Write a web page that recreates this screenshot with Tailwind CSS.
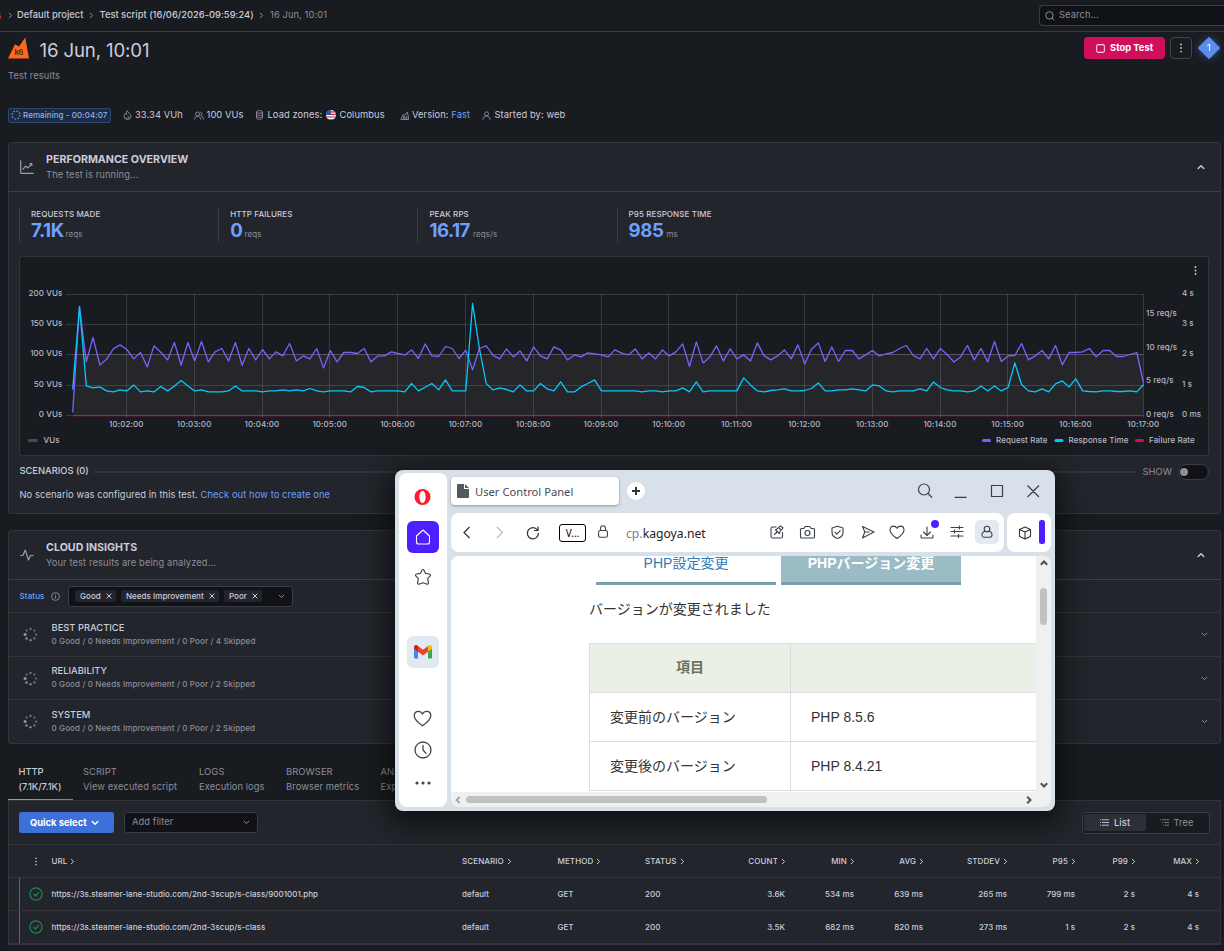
<!DOCTYPE html>
<html lang="en">
<head>
<meta charset="utf-8">
<title>16 Jun, 10:01 - Test results</title>
<script src="https://cdn.jsdelivr.net/npm/@tailwindcss/browser@4"></script>
</head>
<body class="relative h-[951px] w-[1224px] overflow-hidden whitespace-nowrap bg-[#181b1f] font-['Inter',sans-serif] text-[9.33px] leading-[14px] tracking-[0.01em] text-[#ccccdc]">

<svg class="hidden">
  <symbol id="chev-r" viewBox="0 0 6 8"><path d="M1.5 1.2 4.3 4 1.5 6.8" fill="none" stroke="currentColor" stroke-width="1.2" stroke-linecap="round" stroke-linejoin="round"/></symbol>
  <symbol id="chev-d" viewBox="0 0 8 6"><path d="M1.2 1.5 4 4.3 6.8 1.5" fill="none" stroke="currentColor" stroke-width="1.2" stroke-linecap="round" stroke-linejoin="round"/></symbol>
  <symbol id="chev-u" viewBox="0 0 8 6"><path d="M1.2 4.5 4 1.7 6.8 4.5" fill="none" stroke="currentColor" stroke-width="1.4" stroke-linecap="round" stroke-linejoin="round"/></symbol>
  <symbol id="dots" viewBox="0 0 4 10"><circle cx="2" cy="1.4" r=".9"/><circle cx="2" cy="5" r=".9"/><circle cx="2" cy="8.6" r=".9"/></symbol>
  <symbol id="x" viewBox="0 0 6 6"><path d="M.9.9 5.1 5.1M5.1.9.9 5.1" stroke="currentColor" stroke-width="1" stroke-linecap="round"/></symbol>
  <symbol id="spin" viewBox="0 0 16 16"><circle cx="2.2" cy="8" r="1.7" opacity=".95"/><circle cx="3.7" cy="12.2" r="1.4" opacity=".85"/><circle cx="8" cy="14" r="1.3" opacity=".8"/><circle cx="12.2" cy="12.2" r="1.2" opacity=".75"/><circle cx="14" cy="8" r="1.1" opacity=".7"/><circle cx="12.2" cy="3.8" r="1.1" opacity=".7"/><circle cx="8" cy="2" r="1.2" opacity=".75"/><circle cx="3.8" cy="3.8" r="1.1" opacity=".7"/></symbol>
  <symbol id="ok" viewBox="0 0 14 14"><circle cx="7" cy="7" r="6.1" fill="none" stroke="#1f8a52" stroke-width="1.2"/><path d="m4.600 7.200 1.800 1.800 3.200-3.600" fill="none" stroke="#1f8a52" stroke-width="1.2" stroke-linecap="round" stroke-linejoin="round"/></symbol>
</svg>

<header class="flex h-8 items-center border-b border-[#393b40] font-medium tracking-normal">
  <span class="w-1 text-[#d8613c]"><span class="-ml-1">s</span></span>
  <svg class="ml-[4px] mt-[-1px] h-[7px] w-[5px] text-[#8e8e9a]"><use href="#chev-r"/></svg>
  <span class="ml-1 mt-[-2px] w-[67px] tracking-[0.004em]">Default project</span>
  <svg class="ml-[5px] mt-[-1px] h-[7px] w-[5px] text-[#8e8e9a]"><use href="#chev-r"/></svg>
  <span class="ml-[5.500px] mt-[-2px] w-[154.500px] tracking-[0.002em]">Test script (16/06/2026-09:59:24)</span>
  <svg class="ml-[5px] mt-[-1px] h-[7px] w-[5px] text-[#8e8e9a]"><use href="#chev-r"/></svg>
  <span class="ml-[6px] mt-[-2px] font-normal tracking-[0.01em] text-[#8e8e9a]">16 Jun, 10:01</span>
  <div class="ml-auto flex h-[21px] w-[185px] items-center rounded-l-[4px] border border-r-0 border-[#3c3d43] bg-[#111217] font-normal tracking-[0.01em] text-[#8e8e9a]">
    <svg class="ml-[5px] size-[10px]" viewBox="0 0 10 10" fill="none" stroke="currentColor"><circle cx="4.400" cy="4.400" r="3.700"/><path d="m7.200 7.200 2.100 2.100"/></svg>
    <span class="ml-[4px] mt-[-1px]">Search...</span>
  </div>
</header>

<section class="flex h-[58px] justify-between">
  <div class="pl-2">
    <div class="flex h-9 items-center">
      <svg class="mt-[-4px] h-[22px] w-[21px]" viewBox="0 0 21 22"><path d="M0 21.500 7 7.200l4 2.300L17.200.500 21 21.500Z" fill="#ff671d"/><text x="6.600" y="18" font-size="7.500" font-family="Inter" font-weight="600" fill="#3a2620" letter-spacing="-.4">k6</text></svg>
      <h1 class="ml-[10.500px] mt-[2px] text-[18.67px] font-normal tracking-[-0.008em]">16 Jun, 10:01</h1>
    </div>
    <p class="mt-px text-[#8e8e9a]">Test results</p>
  </div>
  <div class="flex pr-[4px] pt-[5px]">
    <div class="flex h-[22px] w-[81px] items-center rounded-[4px] bg-[#d10e5c] pl-[12px] text-white"><svg class="size-[9px]" viewBox="0 0 9 9"><rect x=".6" y=".6" width="7.800" height="7.800" rx="1.600" fill="none" stroke="#f7d0de" stroke-width="1.100"/></svg><span class="ml-[5px] font-bold tracking-[0.002em]">Stop Test</span></div>
    <div class="ml-[5px] grid h-[22px] w-[22px] place-items-center rounded-[4px] border border-[#44454b]"><svg class="h-[10px] w-1 fill-[#ccccdc]"><use href="#dots"/></svg></div>
    <div class="ml-[6px] grid size-[22px] place-items-center drop-shadow-[0_0_4px_rgba(70,120,230,0.6)]"><div class="grid size-[16px] rotate-45 place-items-center rounded-[1px] bg-[#5b8def]"><span class="-rotate-45 font-medium text-[#e6e9f5]">1</span></div></div>
  </div>
</section>

<section class="mt-[17px] flex h-4 items-center pl-2">
  <div class="flex h-[15px] w-[103px] items-center rounded-[2px] border border-[#2b4677] bg-[#1d2a40] text-[8px] font-medium tracking-[0.008em] text-[#8ab2f5]"><svg class="ml-[2px] size-[10px]" viewBox="0 0 10 10"><circle cx="5" cy="5" r="4" fill="none" stroke="currentColor" stroke-width="1.100" stroke-dasharray="1.4 1.74"/></svg><span class="ml-[2px]">Remaining - 00:04:07</span></div>
  <svg class="ml-[12px] h-[10px] w-[9px]" viewBox="0 0 9 10" fill="none" stroke="#8e8e9a" stroke-width=".9"><path d="M4.300.700C4.600 2.600 8 3.600 8 6.300A3.300 3.300 0 0 1 4.500 9.400 3.400 3.400 0 0 1 1 6.200C1 4.900 1.700 4 2.500 3.200c0 .9.4 1.300.8 1.400C3.200 3 3.500 1.700 4.300.700Z"/><path d="M4.600 5.300c.9.800 1.200 1.400 1.200 2a1.300 1.300 0 0 1-2.600 0"/></svg>
  <span class="ml-[3px] w-[59px]">33.34 VUh</span>
  <svg class="mr-[2.500px] h-[9px] w-[10px]" viewBox="0 0 10 9" fill="none" stroke="#8e8e9a" stroke-width=".9"><circle cx="3.600" cy="3" r="2"/><path d="M.500 8.500c.100-2 1.300-3.300 3.100-3.300S6.600 6.500 6.700 8.500M6.200 1.100a2 2 0 0 1 .600 3.700C8.500 5.100 9.400 6.500 9.500 8.500"/></svg>
  <span class="w-[49px]">100 VUs</span>
  <svg class="mr-[5px] h-[10px] w-[7px]" viewBox="0 0 7 10" fill="none" stroke="#8e8e9a" stroke-width=".9"><ellipse cx="3.500" cy="1.900" rx="3" ry="1.300"/><path d="M.5 1.900v6c0 .8 1.300 1.400 3 1.400s3-.6 3-1.400v-6M.5 4c0 .8 1.300 1.300 3 1.300S6.500 4.800 6.500 4M.5 6c0 .8 1.300 1.300 3 1.300S6.500 6.800 6.500 6"/></svg>
  <span class="w-[58px]">Load zones:</span>
  <svg class="mr-[4px] size-[10px]" viewBox="0 0 10 10"><clipPath id="fl"><circle cx="5" cy="5" r="5"/></clipPath><g clip-path="url(#fl)"><rect width="10" height="10" fill="#f0eef2"/><path d="M0 1.800h10M0 4.400h10M0 7h10M0 9.500h10" stroke="#d62a45" stroke-width="1.200"/><rect width="5" height="5" fill="#2a56a8"/></g></svg>
  <span class="w-[60px]">Columbus</span>
  <svg class="mr-[3px] h-[9px] w-[9.500px]" viewBox="0 0 9 9" fill="none" stroke="#8e8e9a" stroke-width=".9"><path d="M.6 8.500 3 3.300l1.600 1L7.200.900l1.300 7.600ZM3.300 5v2.700M4.800 5.700 3.600 6.700l1.200 1M6.400 4.800 5.600 6.500"/><circle cx="6.200" cy="7" r=".7"/></svg>
  <span class="w-[69.500px]">Version: <span class="text-[#6e9fff]">Fast</span></span>
  <svg class="mr-[4px] h-[9px] w-[9px]" viewBox="0 0 9 9" fill="none" stroke="#8e8e9a" stroke-width=".9"><circle cx="4.500" cy="2.800" r="2"/><path d="M.9 8.700c.1-2.200 1.500-3.600 3.600-3.600s3.500 1.400 3.600 3.600"/></svg>
  <span>Started by: web</span>
</section>

<section class="ml-2 mt-[19px] h-[372px] w-[1213px] rounded-[3px] border border-[#33353b] bg-[#22252b]">
  <div class="flex h-[49px] items-center border-b border-[#3e4046] pl-[11px]">
    <svg class="h-[14px] w-[14px]" viewBox="0 0 14 14" fill="none" stroke="#9a9aa8" stroke-width="1.200" stroke-linecap="round" stroke-linejoin="round"><path d="M.7.700v12.600h12.600M2.900 9.300l2.600-3.200 2.500 1.800 3.600-4.100M10 3.700h1.800v1.700"/></svg>
    <div class="ml-[12px]">
      <h2 class="text-[10.67px] font-bold leading-[15px] tracking-[0.001em]">PERFORMANCE OVERVIEW</h2>
      <p class="leading-[15px] tracking-[0.012em] text-[#8e8e9a]">The test is running...</p>
    </div>
    <svg class="ml-auto mr-[15px] h-[6px] w-2"><use href="#chev-u"/></svg>
  </div>
  <div class="ml-[10px] mt-4 flex h-[34px] text-[8px] font-medium leading-[12px]">
    <div class="w-[199.200px] border-l border-[#3a3c42] pl-[11px]"><div>REQUESTS MADE</div><div class="mt-px flex h-5 items-baseline leading-5"><b class="text-[18.67px] font-bold tracking-[-0.026em] text-[#6e9fff]">7.1K</b><span class="ml-[2px] font-normal text-[#8e8e9a]">reqs</span></div></div>
    <div class="w-[199.200px] border-l border-[#3a3c42] pl-[11px]"><div>HTTP FAILURES</div><div class="mt-px flex h-5 items-baseline leading-5"><b class="text-[18.67px] font-bold tracking-[-0.02em] text-[#6e9fff]">0</b><span class="ml-[2px] font-normal text-[#8e8e9a]">reqs</span></div></div>
    <div class="w-[199.200px] border-l border-[#3a3c42] pl-[11px]"><div>PEAK RPS</div><div class="mt-px flex h-5 items-baseline leading-5"><b class="text-[18.67px] font-bold tracking-[-0.026em] text-[#6e9fff]">16.17</b><span class="ml-[3px] font-normal text-[#8e8e9a]">reqs/s</span></div></div>
    <div class="w-[199.200px] border-l border-[#3a3c42] pl-[11px]"><div>P95 RESPONSE TIME</div><div class="mt-px flex h-5 items-baseline leading-5"><b class="text-[18.67px] font-bold tracking-[-0.022em] text-[#6e9fff]">985</b><span class="ml-[3px] font-normal text-[#8e8e9a]">ms</span></div></div>
  </div>
  <div class="ml-[10px] mt-[14px] h-[200px] w-[1190px] rounded-[3px] border border-[#33353b] bg-[#181b1f]">
    <svg id="chart" class="block h-[198px] w-[1188px]" viewBox="20 257 1188 198" font-family="Inter" font-size="8" font-weight="500" fill="#b8b8c6">
      <rect x="72.700" y="354.500" width="1071" height="61" fill="#25262a"/>
      <g stroke="#ffffff" stroke-opacity=".13" stroke-width="1"><path d="M66 294.500H1143.500M66 324.500H1143.500M66 354.500H1143.500M66 385.500H1143.500M66 415.500H72.500"/><path id="grid"/></g>
      <path d="M72.700 354.500H1143.500" stroke="#55565a"/>
      <g text-anchor="end"><text x="62.500" y="296">200 VUs</text><text x="62.500" y="326">150 VUs</text><text x="62.500" y="356">100 VUs</text><text x="62.500" y="387">50 VUs</text><text x="62.500" y="417">0 VUs</text></g>
      <text x="1146" y="316">15 req/s</text><text x="1146" y="350">10 req/s</text><text x="1146" y="383">5 req/s</text><text x="1146" y="417">0 req/s</text>
      <text x="1182" y="296">4 s</text><text x="1182" y="326">3 s</text><text x="1182" y="356">2 s</text><text x="1182" y="387">1 s</text><text x="1182" y="417">0 ms</text>
      <g id="times" text-anchor="middle"></g>
      <g stroke-width="3" stroke-linecap="round"><path d="M29.500 440.500h7" stroke="#4a4b4f"/><path d="M983.500 440.500h6" stroke="#7b61ff"/><path d="M1056 440.500h6" stroke="#00c8ff"/><path d="M1136.500 440.500h6" stroke="#d10e5c"/></g>
      <text x="43.500" y="443">VUs</text><text x="996" y="443">Request Rate</text><text x="1068.500" y="443">Response Time</text><text x="1149" y="443">Failure Rate</text>
      <polyline id="rate" fill="none" stroke="#7b61ff" stroke-width="1.300" stroke-linejoin="round"/>
      <polyline id="resp" fill="none" stroke="#08c8fb" stroke-width="1.300" stroke-linejoin="round"/>
      <rect x="72.500" y="415" width="1071" height="1.200" fill="#d10e5c"/>
      <g fill="#ccccdc"><circle cx="1195.500" cy="267" r=".9"/><circle cx="1195.500" cy="270.500" r=".9"/><circle cx="1195.500" cy="274" r=".9"/></g>
    </svg>
  </div>
  <div class="ml-[10.500px] mr-[11px] mt-2 flex h-4 items-center">
    <span class="mt-[-2px] font-medium tracking-normal">SCENARIOS (0)</span>
    <span class="ml-[5px] mr-[6px] h-[2px] flex-1 bg-[#33353b]"></span>
    <span class="mt-[-1px] text-[#8e8e9a]">SHOW</span>
    <span class="ml-[6px] flex h-4 w-[31px] items-center rounded-full border border-[#3c3d43] bg-[#111217] pl-px"><span class="size-[8px] rounded-full bg-[#8e8e9a]"></span></span>
  </div>
  <p class="ml-[10.500px] mt-2 tracking-[0.01em]">No scenario was configured in this test. <span class="text-[#6e9fff]">Check out how to create one</span></p>
</section>

<section class="ml-2 mt-4 h-[214px] w-[1213px] rounded-[3px] border border-[#33353b] bg-[#22252b]">
  <div class="flex h-[49px] items-center border-b border-[#3e4046] pl-[11px]">
    <svg class="h-[12px] w-[14px]" viewBox="0 0 14 12" fill="none" stroke="#9a9aa8" stroke-width="1.200" stroke-linecap="round" stroke-linejoin="round"><path d="M.7 6.500h2.200L5.200 1l3.300 10 1.900-4.500h2.900"/></svg>
    <div class="ml-[12px]">
      <h2 class="text-[10.67px] font-bold leading-[15px] tracking-[0.001em]">CLOUD INSIGHTS</h2>
      <p class="leading-[15px] tracking-[0.012em] text-[#8e8e9a]">Your test results are being analyzed...</p>
    </div>
    <svg class="ml-auto mr-[15px] h-[6px] w-2"><use href="#chev-u"/></svg>
  </div>
  <div class="flex h-[33px] items-center border-b border-[#33353b] pl-[10.500px] text-[8px] font-medium tracking-[0.004em]">
    <span class="w-[31.500px] tracking-[0.015em] text-[#6e9fff]">Status</span>
    <svg class="size-[9px]" viewBox="0 0 9 9" fill="none" stroke="#8e8e9a" stroke-width=".9"><circle cx="4.500" cy="4.500" r="3.900"/><path d="M4.500 4v2.600M4.500 2.300v1"/></svg>
    <div class="ml-2 flex h-[21px] w-[225px] items-center rounded-[3px] border border-[#3c3d43] bg-[#111217] pl-1.5">
      <span class="flex h-3 w-[41px] items-center rounded-[2px] bg-[#22252b] pl-[5px]">Good<svg class="ml-auto mr-1 size-[6px]"><use href="#x"/></svg></span>
      <span class="ml-[5px] flex h-3 w-[98px] items-center rounded-[2px] bg-[#22252b] pl-[5px]">Needs Improvement<svg class="ml-auto mr-1 size-[6px]"><use href="#x"/></svg></span>
      <span class="ml-[5px] flex h-3 w-[38px] items-center rounded-[2px] bg-[#22252b] pl-[5px]">Poor<svg class="ml-auto mr-1 size-[6px]"><use href="#x"/></svg></span>
      <svg class="ml-auto mr-[7px] h-[5px] w-[7px] text-[#8e8e9a]"><use href="#chev-d"/></svg>
    </div>
  </div>
  <div class="flex h-[44px] items-center border-b border-[#33353b] pl-[14px]"><svg class="size-[15px] fill-[#9a9aa4]"><use href="#spin"/></svg><div class="ml-[13.500px]"><div class="font-medium leading-[14px] tracking-[0.002em]">BEST PRACTICE</div><div class="text-[8px] font-medium leading-[13px] tracking-[0.016em] text-[#8e8e9a]">0 Good / 0 Needs Improvement / 0 Poor / 4 Skipped</div></div><svg class="ml-auto mr-3 h-[5px] w-[7px] text-[#8e8e9a]"><use href="#chev-d"/></svg></div>
  <div class="flex h-[43px] items-center border-b border-[#33353b] pl-[14px]"><svg class="size-[15px] fill-[#9a9aa4]"><use href="#spin"/></svg><div class="ml-[13.500px] mt-[-2px]"><div class="font-medium leading-[14px] tracking-[0.002em]">RELIABILITY</div><div class="text-[8px] font-medium leading-[13px] tracking-[0.016em] text-[#8e8e9a]">0 Good / 0 Needs Improvement / 0 Poor / 2 Skipped</div></div><svg class="ml-auto mr-3 h-[5px] w-[7px] text-[#8e8e9a]"><use href="#chev-d"/></svg></div>
  <div class="flex h-[43px] items-center pl-[14px]"><svg class="size-[15px] fill-[#9a9aa4]"><use href="#spin"/></svg><div class="ml-[13.500px]"><div class="font-medium leading-[14px] tracking-[0.002em]">SYSTEM</div><div class="text-[8px] font-medium leading-[13px] tracking-[0.016em] text-[#8e8e9a]">0 Good / 0 Needs Improvement / 0 Poor / 2 Skipped</div></div><svg class="ml-auto mr-3 h-[5px] w-[7px] text-[#8e8e9a]"><use href="#chev-d"/></svg></div>
</section>

<nav class="ml-2 flex h-[56px] pt-[20px] leading-[15px] text-[#8e8e9a]">
  <div class="relative w-[65px] pl-[10.500px] font-medium tracking-[-0.004em] text-[#ccccdc]">HTTP<br>(7.1K/7.1K)<span class="absolute bottom-0 left-0 h-px w-[65px] bg-linear-to-r from-[#f58a2e] to-[#f0553a]"></span></div>
  <div class="w-[126px] pl-[10px]">SCRIPT<br>View executed script</div>
  <div class="w-[87px]">LOGS<br>Execution logs</div>
  <div class="w-[94.500px]">BROWSER<br>Browser metrics</div>
  <div>ANALYSIS<br>Explore metrics</div>
</nav>

<section class="ml-2 h-[145px] w-[1213px] border border-b-2 border-[#33353b] bg-[#22252b]">
  <div class="flex h-[44px] items-center border-b border-[#33353b] pl-[10px] pr-[10px]">
    <div class="flex h-[21px] w-[95px] items-center rounded-[3px] bg-[#3d71d9] pl-[11px] font-bold tracking-[0.001em] text-white">Quick select<svg class="ml-1 h-[6px] w-2"><path d="M1.200 1.500 4 4.300 6.800 1.500" fill="none" stroke="currentColor" stroke-width="1.500" stroke-linecap="round" stroke-linejoin="round"/></svg></div>
    <div class="ml-[10px] flex h-[21px] w-[134px] items-center justify-between rounded-[3px] border border-[#3c3d43] bg-[#111217] pl-[7px] pr-[7px] text-[#8e8e9a]"><span class="mt-[-1px]">Add filter</span><svg class="h-[5px] w-[7px]"><use href="#chev-d"/></svg></div>
    <div class="ml-auto flex h-[22px] w-[128px] items-center rounded-[3px] border border-[#3c3d43] bg-[#181b1f] p-px text-[#8e8e9a]">
      <div class="flex h-[17px] w-[62px] items-center rounded-[2px] bg-[#2c2f35] pl-4 font-medium text-[#ccccdc]"><svg class="mr-[5px] h-[7px] w-[9px]" viewBox="0 0 9 7" stroke="currentColor" stroke-width=".9"><path d="M0 .8h1M2 .800h7M0 3.500h1M2 3.500h7M0 6.200h1M2 6.200h7"/></svg>List</div>
      <div class="flex h-[17px] flex-1 items-center pl-[14px]"><svg class="mr-[4.500px] h-[7px] w-[9px]" viewBox="0 0 9 7" stroke="currentColor" stroke-width=".8"><path d="M0 .8h1M2 .800h7M2 3.500h1M4 3.500h5M3 6.200h1M5 6.200h4"/></svg>Tree</div>
    </div>
  </div>
  <div id="head" class="grid h-[33px] grid-cols-[42.5px_410.5px_95.5px_87.5px_70px_71px_69px_69px_84px_68px_60px_64px] items-center border-b border-[#33353b] text-[8px] font-medium"></div>
  <div id="rows" class="text-[8px] font-medium tracking-[0.004em]"></div>
</section>

<!-- Browser window lying over the dashboard -->
<div class="absolute left-[395px] top-[470px] flex h-[341px] w-[660px] gap-1 rounded-[8px] bg-[#d8e1e9] px-1 pb-1 pt-[3px] font-['Noto_Sans','Noto_Sans_CJK_JP',sans-serif] tracking-normal text-[#2e3338] shadow-[0_6px_28px_6px_rgba(0,0,0,0.6)]">
  <aside class="flex w-[48px] flex-col items-center rounded-[8px] bg-white pt-[15px]">
    <svg class="mr-px h-[18px] w-[17px]" viewBox="0 0 17 18"><path fill="#ff1b2d" fill-rule="evenodd" d="M8.500 1a8 8 0 1 0 0 16 8 8 0 1 0 0-16Zm0 2.100c1.900 0 3.100 2.600 3.100 5.900s-1.200 5.900-3.100 5.900S5.400 12.300 5.400 9s1.200-5.900 3.100-5.900Z"/></svg>
    <div class="mt-[15px] grid size-8 place-items-center rounded-[6px] bg-[#4d1fff]"><svg class="size-4" viewBox="0 0 16 16" fill="none" stroke="#fff" stroke-width="1.100" stroke-linejoin="round"><path d="M1.500 7 8 1l6.500 6v6a2 2 0 0 1-2 2h-9a2 2 0 0 1-2-2Z"/></svg></div>
    <svg class="mt-[15px] h-[18px] w-[18px]" viewBox="0 0 18 18" fill="none" stroke="#3f464e" stroke-width="1.200" stroke-linejoin="round"><path d="M9 1.500c.6 0 .9.500 1.100.900L11.600 5.400l3.600.600c1.300.200 1.700 1.300.8 2.200l-2.300 2.500.7 3.900c.2 1.400-.8 2-1.900 1.400L9 14.800l-3.500 1.200c-1.100.6-2.100 0-1.900-1.400l.7-3.900L2 8.200c-.9-.9-.5-2 .8-2.200l3.600-.6L7.900 2.400c.2-.4.5-.9 1.100-.9Z"/></svg>
    <div class="mt-[50px] grid size-8 place-items-center rounded-[6px] bg-[#e3e9f0]"><svg class="h-[14px] w-[18px]" viewBox="0 0 18 14"><path d="M0 3v9.500c0 .6.500 1 1 1h3V5Z" fill="#4285f4"/><path d="M14 5v8.500h3c.600 0 1-.5 1-1V3Z" fill="#34a853"/><path d="M14 1v5.700L18 3.700V2.200C18 .300 16-.500 14.600.500Z" fill="#fbbc04"/><path d="M4 6.700V1l5 3.800L14 1v5.700l-5 3.800Z" fill="#ea4335"/><path d="M0 2.200v1.500l4 3V1L3.400.500C2-.500 0 .300 0 2.200Z" fill="#c5221f"/></svg></div>
    <svg class="mr-px mt-[42px] h-[17px] w-[19px]" viewBox="0 0 19 17" fill="none" stroke="#3f464e" stroke-width="1.300" stroke-linejoin="round"><path d="M9.500 15.800C5 12.500 1.200 9.600 1.200 5.700 1.200 3 3 1.300 5.300 1.300c1.800 0 3.300 1 4.200 2.700.9-1.700 2.400-2.700 4.200-2.700 2.300 0 4.100 1.700 4.100 4.400 0 3.900-3.800 6.800-8.300 10.100Z"/></svg>
    <svg class="mr-px mt-[14px] size-[18px]" viewBox="0 0 18 18" fill="none" stroke="#3f464e" stroke-width="1.300" stroke-linecap="round"><circle cx="9" cy="9" r="8"/><path d="M9 4.500V9l3 3.300"/></svg>
    <svg class="mt-[22px] h-1 w-4 fill-[#3f464e]" viewBox="0 0 16 4"><circle cx="2" cy="2" r="1.600"/><circle cx="8" cy="2" r="1.600"/><circle cx="14" cy="2" r="1.600"/></svg>
  </aside>
  <div class="flex min-w-0 flex-1 flex-col">
    <div class="flex h-[36px] items-start pt-[4px]">
      <div class="flex h-[28px] w-[168px] items-center rounded-[4px] bg-white pl-1.5 text-[11.200px] text-[#474d54] shadow-[0_1px_3px_rgba(0,0,0,0.35)]"><svg class="mr-[6px] h-[14px] w-3" viewBox="0 0 12 14" fill="#55585c"><path d="M0 1a1 1 0 0 1 1-1h6v5h5v8a1 1 0 0 1-1 1H1a1 1 0 0 1-1-1ZM8 0l4 4H8Z"/></svg><span class="mt-px">User Control Panel</span></div>
      <svg class="ml-2 mt-[5px] size-[18px]" viewBox="0 0 18 18"><circle cx="9" cy="9" r="9" fill="#fff"/><path d="M9 5v8M5 9h8" stroke="#2e3338" stroke-width="2"/></svg>
      <svg class="ml-auto mr-[10px] mt-[5px] h-4 w-[124px]" viewBox="0 0 124 16" fill="none" stroke="#3b4046" stroke-width="1.200"><circle cx="7" cy="7.500" r="5.500"/><path d="m11 11.500 4 4M37.500 15.400h12M74.500 3.500h11v11h-11zM110.500 3.500 122 15M122 3.500l-11.500 11.500"/></svg>
    </div>
    <div class="mt-1 flex h-[39px] gap-[3px]">
      <div class="flex w-[553px] items-center rounded-[8px] bg-white">
        <svg class="ml-[10px] h-4 w-[82px]" viewBox="0 0 82 16" fill="none" stroke="#2e3338" stroke-width="1.200"><path d="M8.500 2 3 7.500 8.500 13"/><path d="m36 2 5.500 5.500L36 13" stroke="#b5babf"/><path d="M76.500 5A5.600 5.600 0 1 0 77.500 8M77 1.500v4h-4"/></svg>
        <span class="ml-[16px] grid h-[18px] w-[27px] place-items-center rounded-[3px] border border-black text-[10px] leading-none text-black">V...</span>
        <svg class="ml-3 mt-[-2px] h-[13px] w-[10px]" viewBox="0 0 10 13" fill="none" stroke="#3f464e" stroke-width="1.100"><rect x=".6" y="5.500" width="8.800" height="6.800" rx="1.500"/><path d="M2.500 5.500V3.300a2.500 2.500 0 0 1 5 0v2.200"/></svg>
        <span class="ml-[18px] mt-[2px] text-[12.200px] text-[#1f2327]"><span class="text-[#76828e]">cp.</span>kagoya.net</span>
        <svg class="ml-auto mr-[5px] mt-[-1px] h-[24px] w-[229px] overflow-visible" viewBox="0 0 229 24" fill="none" stroke="#3a4148" stroke-width="1.100" stroke-linejoin="round" stroke-linecap="round">
          <rect x="205" y="0" width="24" height="24" rx="5" fill="#e3e9f0" stroke="none"/>
          <path d="M6 7H2.500C1.700 7 1 7.500 1 8.500V16.500c0 .8.500 1.500 1.500 1.500H11c.8 0 1.500-.5 1.500-1.500v-4M4.500 14.500l3-3M5.500 10l4 3.500.5-2 3-3.500L10.500 5.800 7 9ZM9.500 8.500l1.200 1.200"/>
          <path d="M31.500 8.500h2.300l1.400-2h4.600l1.400 2h2.300c.5 0 1 .5 1 1V17c0 .5-.5 1-1 1h-12c-.5 0-1-.5-1-1V9.500c0-.5.5-1 1-1Z"/><circle cx="37.500" cy="13" r="2.500"/>
          <path d="M67.500 6.200 73 8v4.500c0 3-2.300 5-5.500 6-3.200-1-5.500-3-5.500-6V8ZM65 12.200l1.800 1.900 3.400-3.500"/>
          <path d="M92.500 6.500 104 12 92.500 18l2.300-6ZM95 12h4"/>
          <path d="M127 18.500c-3.800-2.600-7-5.200-7-8.500 0-2.300 1.600-3.900 3.500-3.900 1.500 0 2.700.8 3.500 2.200.8-1.400 2-2.200 3.500-2.200 1.900 0 3.500 1.600 3.500 3.900 0 3.300-3.200 5.900-7 8.500Z"/>
          <path d="M157 7v8M153.500 12l3.500 3.500 3.500-3.500M151 15v2c0 .6.500 1 1 1h10c.5 0 1-.4 1-1v-2"/>
          <circle cx="165" cy="4" r="4" fill="#4d1fff" stroke="none"/>
          <path d="M181 7.500h12M181 11.500h12M181 16h12M189.500 6v3M184.500 10v3M188.500 14.500v3"/>
          <circle cx="217" cy="9" r="2.800"/><path d="M215 11c-2 .9-3.200 2.400-3 4.300.1 1.200.8 2 2 2h6c1.200 0 1.900-.8 2-2 .2-1.900-1-3.400-3-4.300"/>
        </svg>
      </div>
      <div class="flex flex-1 items-center rounded-[8px] bg-white"><svg class="ml-[11px] h-[14px] w-[14px]" viewBox="0 0 14 14" fill="none" stroke="#2e3338" stroke-width="1.100" stroke-linejoin="round"><path d="M7 1 12.500 3.500v7L7 13 1.500 10.500v-7ZM1.500 3.500 7 6l5.500-2.500M7 6v7"/></svg><span class="ml-[7px] mt-[-1px] h-6 w-1.5 rounded-[2.500px] bg-[#4d1fff]"></span></div>
    </div>
    <div class="mt-1 flex h-[251px] flex-col overflow-hidden rounded-[8px] bg-[#f0f0f0] font-['Liberation_Sans','Noto_Sans_CJK_JP',sans-serif] text-[14px] leading-[20px] text-[#333]">
      <div class="flex h-[236px]">
        <div class="w-[585px] overflow-hidden bg-white">
          <div class="flex gap-[5px] pl-[145px] text-center leading-[14px]">
            <div class="h-[29px] w-[180px] border-b-[3px] border-[#7c9eab] text-[#337ab7]">PHP設定変更</div>
            <div class="h-[29px] w-[180px] border-b-[3px] border-[#7c9eab] bg-[#9bbbc5] font-bold text-white">PHPバージョン変更</div>
          </div>
          <p class="ml-[138px] mt-[14px]">バージョンが変更されました</p>
          <div class="ml-[138px] mt-[24px] grid w-[600px] grid-cols-[201px_1fr] border-l border-t border-[#ddd]">
            <div class="h-[49px] border-b border-r border-[#ddd] bg-[#ebf0e7] pt-[13px] text-center font-bold text-[#66755f]">項目</div><div class="border-b border-[#ddd] bg-[#ebf0e7]"></div>
            <div class="h-[49px] border-b border-r border-[#ddd] pl-5 pt-[14px]">変更前のバージョン</div><div class="border-b border-[#ddd] pl-5 pt-[14px]">PHP 8.5.6</div>
            <div class="h-[49px] border-b border-r border-[#ddd] pl-5 pt-[14px]">変更後のバージョン</div><div class="border-b border-[#ddd] pl-5 pt-[14px]">PHP 8.4.21</div>
          </div>
        </div>
        <div class="flex w-[15px] flex-col items-center py-1 pt-[4px]"><svg class="h-[6px] w-2" viewBox="0 0 8 6"><path d="M.800 4.800 4 1.500l3.200 3.300" fill="none" stroke="#505050" stroke-width="2"/></svg><span class="mt-[22px] h-[37px] w-[7px] rounded-full bg-[#c1c1c1]"></span><svg class="mt-auto h-[6px] w-2" viewBox="0 0 8 6"><path d="M.800 1.200 4 4.500l3.200-3.300" fill="none" stroke="#505050" stroke-width="2"/></svg></div>
      </div>
      <div class="flex h-[15px] items-center pl-[4px]"><svg class="h-2 w-[6px]" viewBox="0 0 6 8"><path d="M4.800.800 1.500 4l3.300 3.200" fill="none" stroke="#a5a5a5" stroke-width="1.800"/></svg><span class="ml-[5px] h-[7px] w-[301px] rounded-full bg-[#c1c1c1]"></span><svg class="ml-auto mr-[19px] h-2 w-[6px]" viewBox="0 0 6 8"><path d="M1.200.800 4.500 4 1.200 7.200" fill="none" stroke="#505050" stroke-width="2"/></svg></div>
    </div>
  </div>
</div>

<script>
  // Samples every six seconds, in thirds of a pixel below y=250
  const rate = [487,170,335,262,344,327,296,284,298,326,307,350,287,306,329,277,345,277,332,274,335,305,295,332,277,345,295,329,298,326,305,317,280,332,317,326,295,353,301,335,307,307,310,295,335,317,317,305,310,314,299,325,281,317,319,289,295,325,300,359,295,287,315,326,296,320,302,332,290,317,326,290,300,329,314,320,308,311,314,320,299,309,314,296,326,308,326,299,317,305,281,349,275,338,320,287,332,296,326,314,332,278,317,329,317,299,326,284,341,297,278,334,290,334,301,301,326,314,301,317,311,307,295,286,316,326,295,326,295,313,335,320,286,329,295,335,274,334,317,316,280,329,317,301,326,286,344,307,307,305,295,320,301,301,319,319,313,307,400];
  const resp = [418,169,407,413,410,422,425,419,422,404,425,422,425,409,422,407,391,407,422,419,425,425,425,422,407,422,422,422,425,422,422,419,422,419,422,415,422,425,422,422,422,425,409,412,425,422,422,422,422,425,400,422,411,400,419,389,422,422,422,160,295,400,419,413,418,425,404,422,422,400,416,422,395,425,425,410,400,389,422,422,422,422,422,422,425,422,422,425,422,422,413,425,395,425,422,422,422,422,422,383,404,422,425,421,419,416,422,422,421,415,398,422,422,419,419,416,419,422,404,407,422,425,422,422,422,416,422,395,412,419,422,422,425,422,407,422,407,422,412,338,403,422,425,416,425,401,392,410,386,422,424,425,422,422,424,424,422,425,403];
  const pts = a => a.map((v, i) => (72.7 + i * 6.778).toFixed(1) + ',' + (250 + v / 3 + 0.2).toFixed(1)).join(' ');
  document.getElementById('rate').setAttribute('points', pts(rate));
  document.getElementById('resp').setAttribute('points', pts(resp));
  let lines = '', labels = '';
  for (let m = 2; m <= 17; m++) {
    const x = 126.5 + (m - 2) * 67.8;
    lines += `M${Math.floor(x) + 0.5} 294V418`;
    labels += `<text x="${x - 0.2}" y="427">10:${String(m).padStart(2, '0')}:00</text>`;
  }
  document.getElementById('grid').setAttribute('d', lines);
  document.getElementById('times').innerHTML = labels;

  const heads = ['URL', 'SCENARIO', 'METHOD', 'STATUS', 'COUNT', 'MIN', 'AVG', 'STDDEV', 'P95', 'P99', 'MAX'];
  document.getElementById('head').innerHTML = '<svg class="ml-[25px] h-[9px] w-1 fill-[#ccccdc]"><use href="#dots"/></svg>' + heads.map((h, i) =>
    `<div class="flex items-center ${i > 3 ? 'justify-end' : ''}">${h}<svg class="ml-[3px] h-[7px] w-[5px]"><use href="#chev-r"/></svg></div>`).join('');
  const data = [
    ['https://3s.steamer-lane-studio.com/2nd-3scup/s-class/9001001.php', 'default', 'GET', '200', '3.6K', '534 ms', '639 ms', '265 ms', '799 ms', '2 s', '4 s'],
    ['https://3s.steamer-lane-studio.com/2nd-3scup/s-class', 'default', 'GET', '200', '3.5K', '682 ms', '820 ms', '273 ms', '1 s', '2 s', '4 s']
  ];
  document.getElementById('rows').innerHTML = data.map((r, n) =>
    `<div class="grid grid-cols-[42.5px_410.5px_95.5px_87.5px_70px_71px_69px_69px_84px_68px_60px_64px] items-center ${n ? 'h-[32px]' : 'h-[33px] border-b border-[#33353b]'}"><div class="ml-[10px] flex h-[32px] items-center border-l border-[#1f8a52] pl-[9px]"><svg class="size-[14px]"><use href="#ok"/></svg></div>` +
    r.map((c, i) => `<div class="${i > 3 ? 'pr-px text-right' : ''}">${c}</div>`).join('') + '</div>').join('');
</script>
</body>
</html>
